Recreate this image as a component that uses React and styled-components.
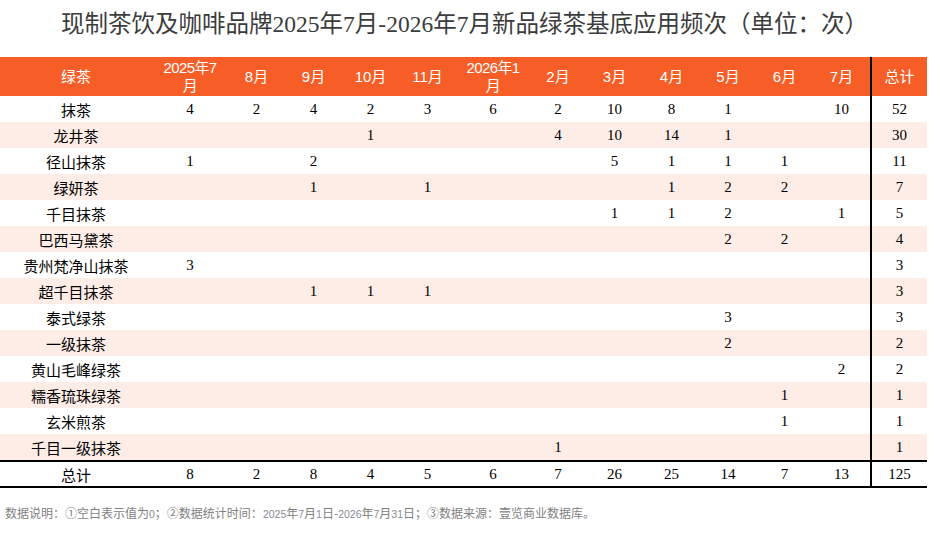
import React from "react";
import styled, { createGlobalStyle } from "styled-components";

const GlobalStyle = createGlobalStyle`
  body {
    margin: 0;
    background: #fff;
    font-family: "Liberation Sans", "Noto Sans CJK SC", sans-serif;
  }
`;

const months = [
  ["2025年7", "月"],
  ["8月"],
  ["9月"],
  ["10月"],
  ["11月"],
  ["2026年1", "月"],
  ["2月"],
  ["3月"],
  ["4月"],
  ["5月"],
  ["6月"],
  ["7月"],
];

// 空白 = 0
const rows = [
  { name: "抹茶", v: [4, 2, 4, 2, 3, 6, 2, 10, 8, 1, "", 10], total: 52 },
  { name: "龙井茶", v: ["", "", "", 1, "", "", 4, 10, 14, 1, "", ""], total: 30 },
  { name: "径山抹茶", v: [1, "", 2, "", "", "", "", 5, 1, 1, 1, ""], total: 11 },
  { name: "绿妍茶", v: ["", "", 1, "", 1, "", "", "", 1, 2, 2, ""], total: 7 },
  { name: "千目抹茶", v: ["", "", "", "", "", "", "", 1, 1, 2, "", 1], total: 5 },
  { name: "巴西马黛茶", v: ["", "", "", "", "", "", "", "", "", 2, 2, ""], total: 4 },
  { name: "贵州梵净山抹茶", v: [3, "", "", "", "", "", "", "", "", "", "", ""], total: 3 },
  { name: "超千目抹茶", v: ["", "", 1, 1, 1, "", "", "", "", "", "", ""], total: 3 },
  { name: "泰式绿茶", v: ["", "", "", "", "", "", "", "", "", 3, "", ""], total: 3 },
  { name: "一级抹茶", v: ["", "", "", "", "", "", "", "", "", 2, "", ""], total: 2 },
  { name: "黄山毛峰绿茶", v: ["", "", "", "", "", "", "", "", "", "", "", 2], total: 2 },
  { name: "糯香琉珠绿茶", v: ["", "", "", "", "", "", "", "", "", "", 1, ""], total: 1 },
  { name: "玄米煎茶", v: ["", "", "", "", "", "", "", "", "", "", 1, ""], total: 1 },
  { name: "千目一级抹茶", v: ["", "", "", "", "", "", 1, "", "", "", "", ""], total: 1 },
];

const sums = [8, 2, 8, 4, 5, 6, 7, 26, 25, 14, 7, 13];

const Page = styled.div`
  width: 929px;
  height: 536px;
  display: flex;
  flex-direction: column;
`;

const Title = styled.h1`
  margin: 0;
  height: 57px;
  padding-top: 7px;
  box-sizing: border-box;
  text-align: center;
  font-family: "Liberation Serif", "Noto Sans CJK SC", serif;
  font-weight: normal;
  font-size: 23.5px;
  line-height: 34px;
  color: #3c3c3c;
  white-space: nowrap;
`;

const Grid = styled.div`
  width: 927px;
  display: grid;
  grid-template-columns: 152px 76px 57px 57px 57px 57px 74px 56px 57px 57px 56px 57px 57px 57px;
`;

const Row = styled.div`
  display: contents;
`;

const HeadCell = styled.div`
  height: 39px;
  background: #f75d26;
  color: #fff;
  display: flex;
  flex-direction: column;
  align-items: center;
  justify-content: center;
  font-family: "Liberation Sans", "Noto Sans CJK SC", sans-serif;
  font-size: 15px;
  line-height: 18px;
  letter-spacing: ${({ $tight }) => ($tight ? "-0.6px" : "0")};
  box-sizing: border-box;
  border-left: ${({ $sep }) => ($sep ? "2px solid #000" : "none")};
`;

const Cell = styled.div`
  height: ${({ $total }) => ($total ? "28px" : "26px")};
  box-sizing: border-box;
  background: ${({ $alt }) => ($alt ? "#fdede6" : "#fff")};
  border-top: ${({ $total }) => ($total ? "2px solid #000" : "none")};
  border-bottom: ${({ $total }) => ($total ? "2px solid #000" : "none")};
  border-left: ${({ $sep }) => ($sep ? "2px solid #000" : "none")};
  display: flex;
  align-items: center;
  justify-content: center;
  color: #000;
  font-family: ${({ $label }) =>
    $label
      ? `"Noto Sans CJK SC", sans-serif`
      : `"Liberation Serif", "Noto Sans CJK SC", serif`};
  font-size: 15px;
  line-height: 1;
  white-space: nowrap;
`;

const Note = styled.div`
  padding: 17px 0 0 5px;
  font-family: "Noto Sans CJK SC", sans-serif;
  font-size: 12px;
  color: #7f7f7f;
  line-height: 16px;
`;

const Num = styled.span`
  font-family: "Liberation Sans", sans-serif;
  font-size: 10.5px;
  color: #8a8a9a;
`;

export default function App() {
  return (
    <Page>
      <GlobalStyle />
      <Title>现制茶饮及咖啡品牌2025年7月-2026年7月新品绿茶基底应用频次（单位：次）</Title>
      <Grid>
        <Row>
          <HeadCell>绿茶</HeadCell>
          {months.map((m, i) => (
            <HeadCell key={i} $tight={m.length > 1}>
              {m.map((line) => (
                <span key={line}>{line}</span>
              ))}
            </HeadCell>
          ))}
          <HeadCell $sep>总计</HeadCell>
        </Row>
        {rows.map((r, ri) => (
          <Row key={r.name}>
            <Cell $alt={ri % 2 === 1} $label>
              {r.name}
            </Cell>
            {r.v.map((val, i) => (
              <Cell key={i} $alt={ri % 2 === 1}>
                {val}
              </Cell>
            ))}
            <Cell $alt={ri % 2 === 1} $sep>
              {r.total}
            </Cell>
          </Row>
        ))}
        <Row>
          <Cell $total $label>
            总计
          </Cell>
          {sums.map((s, i) => (
            <Cell key={i} $total>
              {s}
            </Cell>
          ))}
          <Cell $total $sep>
            125
          </Cell>
        </Row>
      </Grid>
      <Note>
        数据说明：①空白表示值为<Num>0</Num>；②数据统计时间：<Num>2025</Num>年<Num>7</Num>月
        <Num>1</Num>日-<Num>2026</Num>年<Num>7</Num>月<Num>31</Num>日；③数据来源：壹览商业数据库。
      </Note>
    </Page>
  );
}
